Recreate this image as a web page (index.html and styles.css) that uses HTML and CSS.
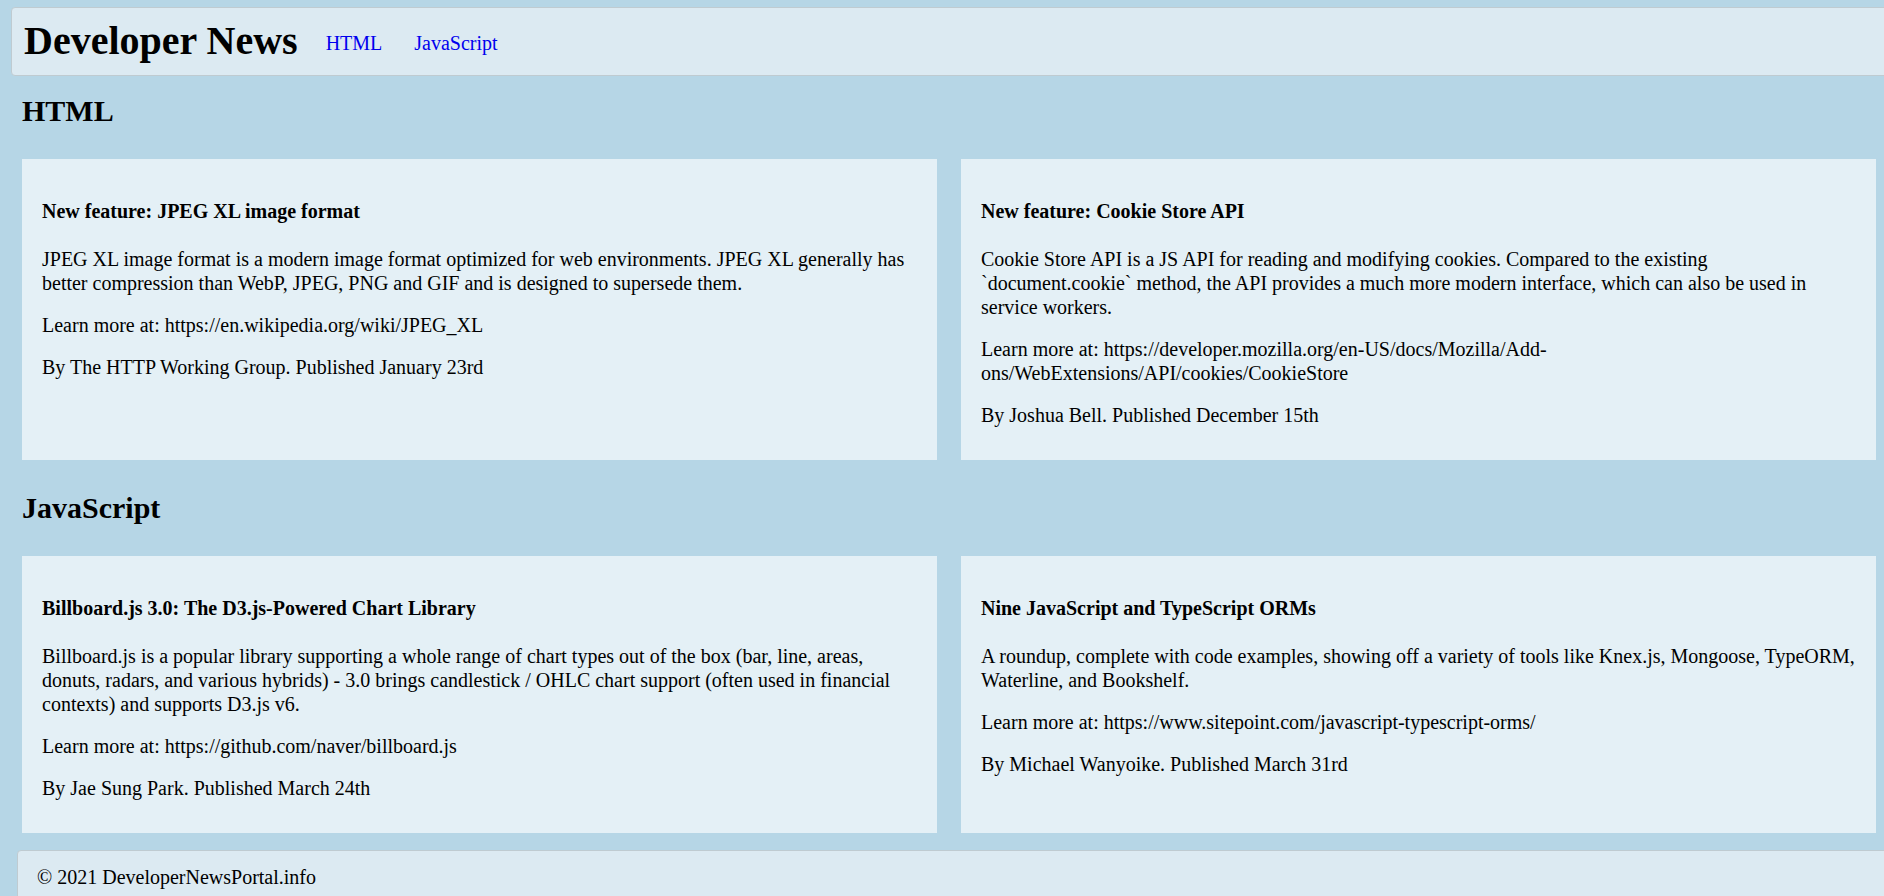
FILE: index.html
```html
<!DOCTYPE html>
<html lang="en">
<head>
<meta charset="utf-8">
<title>Developer News</title>
<link rel="stylesheet" href="styles.css">
</head>
<body>
<header class="site-header">
  <h1 class="brand">Developer News</h1>
  <nav class="nav">
    <a href="#html">HTML</a>
    <a href="#javascript">JavaScript</a>
  </nav>
</header>
<main class="content">
  <section class="news-section" id="html">
    <h2 class="section-title">HTML</h2>
    <div class="card-grid">
      <article class="card">
        <h3 class="card-title">New feature: JPEG XL image format</h3>
        <p>JPEG XL image format is a modern image format optimized for web environments. JPEG XL generally has better compression than WebP, JPEG, PNG and GIF and is designed to supersede them.</p>
        <p>Learn more at: https://en.wikipedia.org/wiki/JPEG_XL</p>
        <p>By The HTTP Working Group. Published January 23rd</p>
      </article>
      <article class="card">
        <h3 class="card-title">New feature: Cookie Store API</h3>
        <p>Cookie Store API is a JS API for reading and modifying cookies. Compared to the existing `document.cookie` method, the API provides a much more modern interface, which can also be used in service workers.</p>
        <p>Learn more at: https://developer.mozilla.org/en-US/docs/Mozilla/Add-ons/WebExtensions/API/cookies/CookieStore</p>
        <p>By Joshua Bell. Published December 15th</p>
      </article>
    </div>
  </section>
  <section class="news-section" id="javascript">
    <h2 class="section-title">JavaScript</h2>
    <div class="card-grid">
      <article class="card">
        <h3 class="card-title">Billboard.js 3.0: The D3.js-Powered Chart Library</h3>
        <p>Billboard.js is a popular library supporting a whole range of chart types out of the box (bar, line, areas, donuts, radars, and various hybrids) - 3.0 brings candlestick / OHLC chart support (often used in financial contexts) and supports D3.js v6.</p>
        <p>Learn more at: https://github.com/naver/billboard.js</p>
        <p>By Jae Sung Park. Published March 24th</p>
      </article>
      <article class="card">
        <h3 class="card-title">Nine JavaScript and TypeScript ORMs</h3>
        <p>A roundup, complete with code examples, showing off a variety of tools like Knex.js, Mongoose, TypeORM, Waterline, and Bookshelf.</p>
        <p>Learn more at: https://www.sitepoint.com/javascript-typescript-orms/</p>
        <p>By Michael Wanyoike. Published March 31rd</p>
      </article>
    </div>
  </section>
</main>
<footer class="site-footer">© 2021 DeveloperNewsPortal.info</footer>
</body>
</html>
```
FILE: styles.css
```css
html {
  background: #b6d6e6;
  overflow: hidden;
}

body {
  margin: 0;
  font-family: "Liberation Serif", "Times New Roman", serif;
  font-size: 20px;
  line-height: 1.2;
  color: #000;
  background: #b6d6e6;
}

.site-header {
  display: flex;
  align-items: center;
  margin: 7px -40px 0 11px;
  padding: 10px 12px 11px;
  background: #dceaf2;
  border: 1px solid #bfcbd1;
  border-radius: 4px;
}

.brand {
  margin: 0 28px 0 0;
  font-size: 40px;
  line-height: 46px;
  font-weight: bold;
}

.nav {
  display: flex;
  gap: 32px;
  margin-top: 3px;
}

.nav a {
  font-size: 20px;
  color: #0000ee;
  text-decoration: none;
}

.content {
  display: flex;
  flex-direction: column;
  gap: 30px;
  padding: 17px 8px 0 22px;
}

.section-title {
  margin: 0 0 31px;
  font-size: 30px;
  line-height: 35px;
  font-weight: bold;
}

.card-grid {
  display: grid;
  grid-template-columns: 1fr 1fr;
  gap: 24px;
}

.card {
  padding: 20px;
  background: #e4f0f6;
}

.card-title {
  margin: 20px 0 24px;
  font-size: 20px;
  font-weight: bold;
}

.card p {
  margin: 18px 0;
  font-size: 20px;
}

.card p:last-child {
  margin-bottom: 13px;
}

.site-footer {
  margin: 17px -40px 0 17px;
  padding: 14px 19px 20px;
  background: #dceaf2;
  border: 1px solid #bfcbd1;
  border-radius: 4px;
}
```
